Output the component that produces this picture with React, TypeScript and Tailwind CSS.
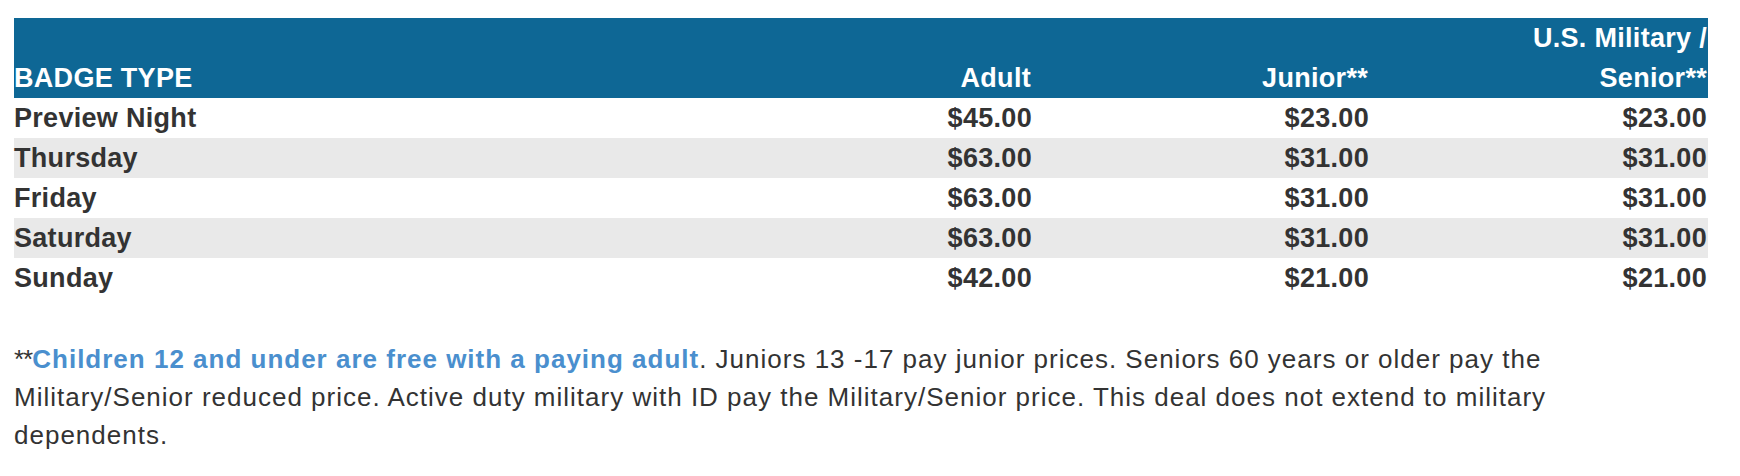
const rows = [
  { name: "Preview Night", adult: "$45.00", junior: "$23.00", senior: "$23.00" },
  { name: "Thursday", adult: "$63.00", junior: "$31.00", senior: "$31.00" },
  { name: "Friday", adult: "$63.00", junior: "$31.00", senior: "$31.00" },
  { name: "Saturday", adult: "$63.00", junior: "$31.00", senior: "$31.00" },
  { name: "Sunday", adult: "$42.00", junior: "$21.00", senior: "$21.00" },
];

export default function App() {
  return (
    <div className="min-h-[476px] bg-white pl-[14px] pt-[18px] font-['Liberation_Sans',Arial,sans-serif] text-[#333]">
      {/* Price table */}
      <div className="w-[1694px] text-[27px] font-bold leading-[40px] tracking-[0.3px]">
        <div className="grid grid-cols-[682px_337px_337px_338px] bg-[#0e6795] text-white">
          <div className="self-end">BADGE TYPE</div>
          <div className="self-end pr-[2px] text-right">Adult</div>
          <div className="self-end pr-[2px] text-right">Junior**</div>
          <div className="pr-[1px] text-right">
            U.S. Military /
            <br />
            Senior**
          </div>
        </div>
        {rows.map((r, i) => (
          <div
            key={r.name}
            className={
              "grid grid-cols-[682px_337px_337px_338px] " +
              (i % 2 === 1 ? "bg-[#e9e9e9]" : "bg-white")
            }
          >
            <div>{r.name}</div>
            <div className="pr-[1px] text-right">{r.adult}</div>
            <div className="pr-[1px] text-right">{r.junior}</div>
            <div className="pr-[1px] text-right">{r.senior}</div>
          </div>
        ))}
      </div>

      {/* Footnote */}
      <p className="mt-[42px] w-[1600px] text-[26px] leading-[38px] tracking-[1px] text-[#333]">
        <span className="tracking-[-1px]">**</span>
        <span className="font-bold tracking-[1px] text-[#4a8fce]">
          Children 12 and under are free with a paying adult
        </span>
        . Juniors 13 -17 pay junior prices. Seniors 60 years or older pay the
        Military/Senior reduced price. Active duty military with ID pay the
        Military/Senior price. This deal does not extend to military dependents.
      </p>
    </div>
  );
}
